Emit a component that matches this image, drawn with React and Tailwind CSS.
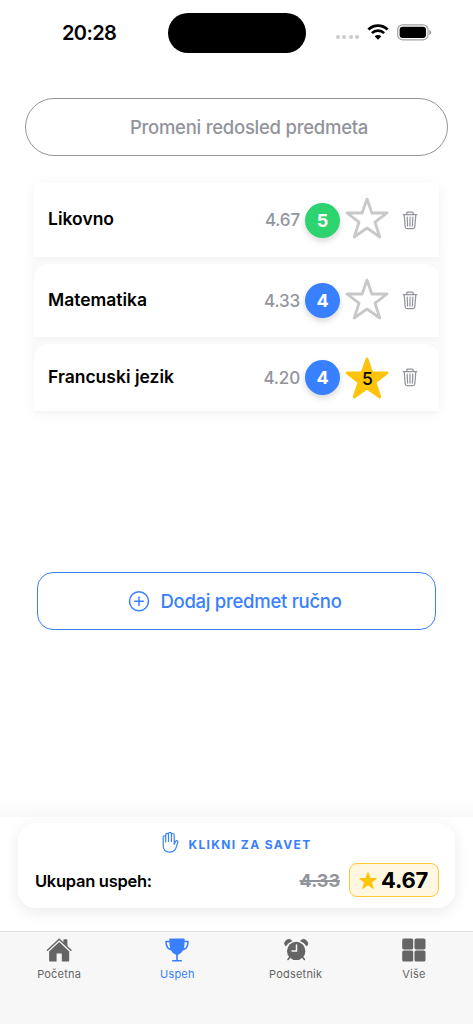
const SUBJECTS = [
  { name: "Likovno", average: "4.67", grade: 5, color: "bg-[#2dd36f]", height: "h-[74px]" },
  { name: "Matematika", average: "4.33", grade: 4, color: "bg-[#3880ff]", height: "h-[73px]" },
  { name: "Francuski jezik", average: "4.20", grade: 4, color: "bg-[#3880ff]", height: "h-[67px]", goal: 5 },
];

const TABS = [
  { label: "Početna", icon: HomeIcon },
  { label: "Uspeh", icon: TrophyIcon, active: true },
  { label: "Podsetnik", icon: AlarmIcon },
  { label: "Više", icon: GridIcon },
];

function WifiIcon() {
  return (
    <svg className="h-[16px] w-[22px]" viewBox="0 0 22 16" fill="none">
      <path d="M1.4 5.500a13.600 13.600 0 0 1 19.200 0" stroke="#000" strokeWidth="2.800" />
      <path d="M4.900 9.100a8.800 8.800 0 0 1 12.200 0" stroke="#000" strokeWidth="2.700" />
      <path d="M11 15.800 7.600 12.300a4.900 4.900 0 0 1 6.800 0z" fill="#000" />
    </svg>
  );
}

function BatteryIcon() {
  return (
    <svg className="h-[17px] w-[35px]" viewBox="0 0 35 17" fill="none">
      <rect x="0.700" y="0.800" width="30.300" height="15" rx="5" stroke="#a3a3a3" strokeWidth="1.200" />
      <rect x="2.600" y="2.700" width="26.400" height="11.200" rx="3.200" fill="#000" />
      <path d="M32.400 6v5c1.100-.4 1.700-1.400 1.700-2.500S33.500 6.400 32.400 6z" fill="#8f8f8f" />
    </svg>
  );
}

function StarIcon({ className, filled }) {
  return (
    <svg className={className} viewBox="0 0 44 42" fill="none">
      <path
        d="M22 2 26.900 16H42L30 25.200 34.800 40 22 31 9.200 40 14 25.200 2 16H17.100z"
        fill={filled ? "#ffc409" : "none"}
        stroke={filled ? "#ffc409" : "#c8c8c8"}
        strokeWidth="2.800"
        strokeLinejoin="round"
      />
    </svg>
  );
}

function TrashIcon() {
  return (
    <svg
      className="h-[19px] w-4"
      viewBox="0 0 16 19"
      fill="none"
      stroke="#92949c"
      strokeWidth="1.250"
      strokeLinecap="round"
      strokeLinejoin="round"
    >
      <path d="M1.200 3.500H14.800M4.800 3.300V2.100Q4.800 1 5.900 1H10.100Q11.200 1 11.200 2.100V3.300" />
      <path d="M2.200 3.700 3.200 16Q3.400 17.600 4.900 17.600H11.100Q12.600 17.600 12.800 16L13.800 3.700" />
      <path d="M5.200 6.200 5.600 15M8 6.200V15M10.800 6.200 10.400 15" />
    </svg>
  );
}

function AddIcon() {
  return (
    <svg className="h-[22px] w-[22px]" viewBox="0 0 22 22" fill="none" stroke="#3880ff" strokeWidth="1.500" strokeLinecap="round">
      <circle cx="11" cy="11.300" r="9.500" />
      <path d="M11 7v8.600M6.700 11.300h8.600" />
    </svg>
  );
}

function HandIcon() {
  return (
    <svg
      className="h-[21px] w-[17px]"
      viewBox="0 0 17 21"
      fill="none"
      stroke="#3880ff"
      strokeWidth="1.200"
      strokeLinecap="round"
      strokeLinejoin="round"
    >
      <path d="M1.200 13V5a1.250 1.250 0 0 1 2.500 0V10M3.700 9.500V2.700a1.400 1.400 0 0 1 2.800 0V9.500M6.500 9V1.900a1.450 1.450 0 0 1 2.900 0V9.500M9.400 9.500V2.900a1.400 1.400 0 0 1 2.800 0V12.300L13.400 9.700Q14.200 8.300 15.300 8.800 16.200 9.300 15.700 10.700L14.200 15.400Q12.700 20.200 7.500 20.200 1.200 20.200 1.200 13" />
    </svg>
  );
}

function HomeIcon() {
  return (
    <svg className="h-6 w-[26px]" viewBox="0 0 26 24" fill="currentColor">
      <path d="M13.200 4.100 3.100 13.500V22.400Q3.100 23.600 4.300 23.600H10.600V15.500H15.800V23.600H22Q23.200 23.600 23.200 22.400V13.500z" />
      <path d="M1.500 12.200 13.200 1.300 24.900 12.200" fill="none" stroke="currentColor" strokeWidth="1.500" strokeLinecap="round" strokeLinejoin="round" />
      <path d="M17.400 1.900Q17.400 1.200 18.100 1.200H20.700Q21.400 1.200 21.400 1.900V8.600L17.400 4.900z" />
    </svg>
  );
}

function TrophyIcon() {
  return (
    <svg className="h-6 w-[26px]" viewBox="0 0 26 24" fill="currentColor">
      <path d="M6.200.4H19.800Q20.700.4 20.700 1.300L20.400 7.500Q19.700 14.200 14.900 16.300L13.800 16.900V22.100H17.300Q18 22.200 18 22.900V23.500H8V22.900Q8 22.200 8.700 22.100H12.200V16.900L11.100 16.300Q6.300 14.200 5.600 7.500L5.300 1.300Q5.300.4 6.200.4z" />
      <path d="M6 3.500H2Q1.900 10.500 7.300 11.700M20 3.500H24Q24.100 10.500 18.700 11.700" fill="none" stroke="currentColor" strokeWidth="1.500" />
    </svg>
  );
}

function AlarmIcon() {
  return (
    <svg className="h-6 w-[26px]" viewBox="0 0 26 24">
      <g fill="currentColor">
        <path d="M2.700 8.100A3.700 3.700 0 0 1 8.900 2.900Q4.800 4.400 2.700 8.100zM23.700 8.100A3.700 3.700 0 0 0 17.500 2.900Q21.600 4.400 23.700 8.100z" stroke="currentColor" strokeWidth="0.800" strokeLinejoin="round" />
        <circle cx="13.200" cy="12.900" r="9.200" />
      </g>
      <path d="M6.700 19.200 5 21.500M19.700 19.200 21.400 21.500" stroke="currentColor" strokeWidth="1.600" strokeLinecap="round" />
      <path d="M13.500 6.900V13.100H9" fill="none" stroke="#f7f7f7" strokeWidth="1.500" strokeLinecap="round" />
    </svg>
  );
}

function GridIcon() {
  return (
    <svg className="h-6 w-[26px]" viewBox="0 0 26 24" fill="currentColor">
      <rect x="1.200" y="0.400" width="11" height="11" rx="1.600" />
      <rect x="13.500" y="0.400" width="11" height="11" rx="1.600" />
      <rect x="1.200" y="12.500" width="11" height="11" rx="1.600" />
      <rect x="13.500" y="12.500" width="11" height="11" rx="1.600" />
    </svg>
  );
}

function StatusBar() {
  return (
    <div className="flex h-[98px] shrink-0 items-start">
      <span className="ml-[62px] mt-[18px] w-[105.500px] text-[20px] leading-[30px] font-semibold tracking-[-0.600px]">
        20:28
      </span>
      <div className="mt-[12.500px] h-[40.500px] w-[138px] rounded-full bg-black" />
      <div className="ml-[30px] mt-[35px] flex gap-[2.600px]">
        {[1, 2, 3, 4].map((dot) => (
          <span key={dot} className="h-[4px] w-[4px] rounded-full bg-[#cccccc]" />
        ))}
      </div>
      <div className="ml-[7.500px] mt-[24px] flex gap-2">
        <WifiIcon />
        <BatteryIcon />
      </div>
    </div>
  );
}

function SubjectRow({ subject, first }) {
  return (
    <div
      className={`relative flex items-center bg-white pl-3.5 shadow-[0_3px_5px_rgba(0,0,0,0.025)] ${subject.height} ${first ? "" : "rounded-t-[14px]"}`}
    >
      <span className="flex-1 pb-px text-[17.500px] font-semibold whitespace-nowrap">{subject.name}</span>
      <span className="mr-[5px] pt-[2px] text-[17px] font-[550] tracking-[-0.150px] text-[#92949c]">{subject.average}</span>
      <span
        className={`flex h-[35px] w-[35px] items-center justify-center rounded-full text-[18px] font-bold text-white shadow-[0_3px_6px_rgba(0,0,0,0.16)] ${subject.color}`}
      >
        {subject.grade}
      </span>
      <span className="relative ml-[5px] mr-[13px] flex h-[42px] w-[44px] items-center justify-center pt-[3px] pl-px text-[17.500px] font-medium">
        <StarIcon
          className={`absolute left-0 h-[42px] w-[44px] ${subject.goal ? "top-0" : "-top-[2px]"}`}
          filled={Boolean(subject.goal)}
        />
        <span className="relative">{subject.goal}</span>
      </span>
      <span className="mr-[21px]">
        <TrashIcon />
      </span>
    </div>
  );
}

export default function App() {
  return (
    <div className="flex h-[1024px] w-[473px] flex-col overflow-hidden bg-white font-[Inter,sans-serif] text-black">
      <StatusBar />

      <button className="mr-[25px] ml-[25px] h-[58px] shrink-0 rounded-full border border-[#92949c] pt-px pl-[25px] text-[18.500px] font-[450] tracking-[-0.260px] text-[#92949c]">
        Promeni redosled predmeta
      </button>

      {/* Subjects */}
      <div className="mx-[34px] mt-[27px] flex shrink-0 flex-col gap-[7px] bg-[#fafafa] shadow-[0_2px_16px_rgba(0,0,0,0.045)]">
        {SUBJECTS.map((subject, index) => (
          <SubjectRow key={subject.name} subject={subject} first={index === 0} />
        ))}
      </div>

      <button className="mx-[37px] mt-[161px] flex h-[58px] shrink-0 items-center justify-center gap-2.5 rounded-2xl border border-[#3880ff] pr-[7px] pl-1 text-[18.500px] font-[450] tracking-[-0.280px] text-[#3880ff]">
        <AddIcon />
        <span className="pt-px">Dodaj predmet ručno</span>
      </button>

      {/* Overall success */}
      <div className="mt-auto h-[18px] bg-linear-to-b from-white to-[#f9f9f9]" />
      <div className="h-[114px] shrink-0 px-[18px] pt-[6px]">
        <div className="flex h-[85px] flex-col rounded-[17px] bg-white shadow-[0_4px_16px_rgba(0,0,0,0.08)]">
          <div className="flex h-[40px] items-center justify-center gap-[9px] pb-[2px] pl-px text-[12px] font-bold tracking-[1.380px] text-[#3880ff]">
            <HandIcon />
            <span className="pt-[5px]">KLIKNI ZA SAVET</span>
          </div>
          <div className="flex h-[34px] items-center pl-[17px] pr-4">
            <span className="flex-1 pt-[2px] text-[16.500px] font-semibold tracking-[-0.280px]">Ukupan uspeh:</span>
            <span className="mr-[9px] pt-px text-[18px] font-bold text-[#92949c] line-through decoration-[1.500px]">4.33</span>
            <span className="flex h-[34px] w-[90px] items-center gap-[4px] rounded-lg border border-[#ffc933] bg-[#fff7e0] pl-[9px] text-[22px] font-bold tracking-[-0.200px]">
              <StarIcon className="h-[17px] w-[18px]" filled />
              <span>4.67</span>
            </span>
          </div>
        </div>
      </div>

      <nav className="grid h-[93px] shrink-0 grid-cols-4 border-t border-[#dddddd] bg-[#f7f7f7]">
        {TABS.map(({ label, icon: Icon, active }) => (
          <div
            key={label}
            className={`flex flex-col items-center pt-[6px] text-[11px] leading-4 tracking-[0.200px] ${active ? "text-[#3880ff]" : "text-[#656565]"}`}
          >
            <Icon />
            <span className="mt-[4px]">{label}</span>
          </div>
        ))}
      </nav>
    </div>
  );
}
